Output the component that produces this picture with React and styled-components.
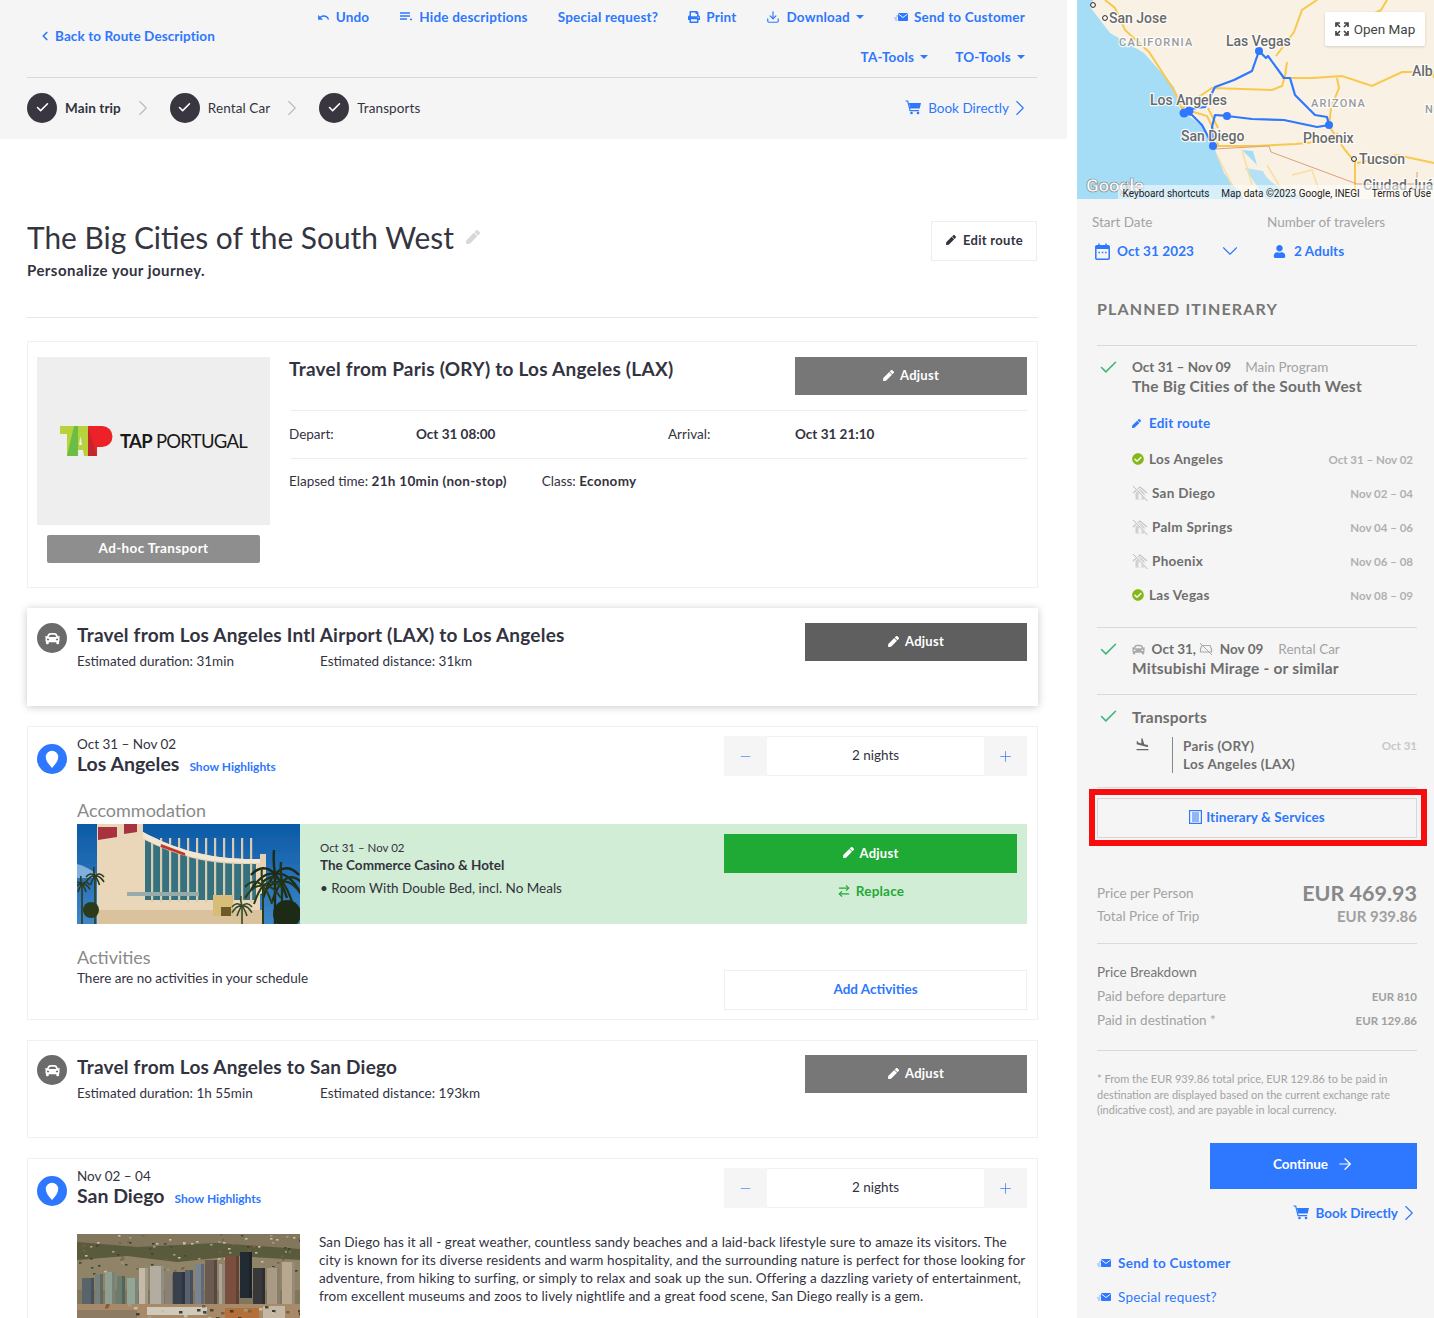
import React from "react";
import styled, { createGlobalStyle } from "styled-components";
import {
    Check,
    ChevronLeft,
    ChevronRight,
    ChevronDown,
    ArrowRight,
    Plus,
    Minus,
    Download as DownloadIcon,
    ArrowRightLeft,
} from "lucide-react";
import { FaPrint, FaPen, FaCar, FaUser, FaCheckCircle } from "react-icons/fa";
import { MdFlightLand, MdUndo } from "react-icons/md";

const BLUE = "#2e77ff";
const INK = "#33333f";

const GlobalStyle = createGlobalStyle`
    html, body {
        margin: 0;
        height: 1318px;
        overflow: hidden;
        background: #fff;
    }
    body {
        font-family: "Lato", "Liberation Sans", sans-serif;
        font-size: 13.5px;
        color: ${INK};
    }
    * { box-sizing: border-box; }
`;

const Page = styled.div`
    display: flex;
    width: 1434px;
    height: 1318px;
    overflow: hidden;
    gap: 10px;
`;

const Main = styled.main`
    width: 1067px;
    flex: none;
`;

const TopBar = styled.div`
    height: 139px;
    background: #f5f5f5;
    padding: 0 30px 0 27px;
`;

const TopHeader = styled.div`
    height: 78px;
    display: flex;
    justify-content: space-between;
    align-items: flex-start;
    border-bottom: 1px solid #d9d9d9;
`;

const BackLink = styled.a`
    display: flex;
    align-items: center;
    gap: 3px;
    margin: 26px 0 0 11px;
    line-height: 20px;
    font-weight: 700;
    letter-spacing: 0.1px;
    color: ${BLUE};
`;

const ToolRows = styled.div`
    display: flex;
    flex-direction: column;
    align-items: flex-end;
    gap: 20px;
    padding: 7px 12px 0 0;
`;

const ToolRow = styled.div`
    display: flex;
    gap: ${(p) => p.$gap}px;
`;

const Tool = styled.a`
    display: flex;
    align-items: center;
    gap: 6px;
    height: 20px;
    font-weight: 700;
    letter-spacing: 0.2px;
    color: ${BLUE};
    white-space: nowrap;
`;

const Caret = styled.span`
    width: 0;
    height: 0;
    border-left: 4px solid transparent;
    border-right: 4px solid transparent;
    border-top: 4px solid ${BLUE};
`;

const StepRow = styled.div`
    height: 61px;
    display: flex;
    align-items: center;
    padding: 0 4px 2px 0;
`;

const StepDot = styled.span`
    width: 30px;
    height: 30px;
    border-radius: 50%;
    background: #3a3640;
    color: #fff;
    display: flex;
    align-items: center;
    justify-content: center;
    margin-right: 8px;
`;

const StepLabel = styled.span`
    font-weight: ${(p) => (p.$bold ? 700 : 400)};
    letter-spacing: 0.1px;
`;

const StepChevron = styled(ChevronRight)`
    color: #b9b9b9;
    margin: 0 14px 0 9px;
`;

const BookLink = styled.a`
    margin-left: auto;
    display: flex;
    align-items: center;
    gap: 6px;
    color: ${BLUE};
    font-weight: ${(p) => (p.$bold ? 700 : 400)};
`;

const BookChevron = styled(ChevronRight)`
    margin-left: -8px;
`;

const Content = styled.div`
    padding: 80px 29px 0 27px;
`;

const TitleBlock = styled.div`
    display: flex;
    justify-content: space-between;
    align-items: flex-start;
    padding-bottom: 37px;
    border-bottom: 1px solid #e6e6e6;
    margin-bottom: 23px;
`;

const Title = styled.h1`
    display: flex;
    align-items: center;
    gap: 12px;
    margin: 0;
    font-size: 29.9px;
    line-height: 36px;
    font-weight: 400;
    color: #35353f;
`;

const SubTitle = styled.div`
    margin-top: 5px;
    font-size: 15px;
    line-height: 20px;
    font-weight: 700;
    letter-spacing: 0.45px;
`;

const EditRoute = styled.button`
    margin: 2px 1px 0 0;
    width: 106px;
    height: 40px;
    padding: 0 0 2px 1px;
    background: #fff;
    border: 1px solid #eee;
    font: 700 13px "Lato", sans-serif;
    letter-spacing: 0.3px;
    color: ${INK};
    display: flex;
    align-items: center;
    justify-content: center;
    gap: 7px;
`;

const Stack = styled.div`
    display: flex;
    flex-direction: column;
    gap: 20px;
`;

const Card = styled.section`
    border: 1px solid #f0f0f0;
    background: #fff;
    padding: 15px 10px 24px 9px;
`;

const FlightGrid = styled.div`
    display: grid;
    grid-template-columns: 233px 1fr;
    column-gap: 19px;
`;

const LogoBox = styled.div`
    height: 168px;
    background: #eee;
    display: flex;
    align-items: center;
    justify-content: center;
    gap: 6px;
`;

const LogoText = styled.span`
    font-size: 18.5px;
    letter-spacing: -0.75px;
    color: #1a1a1a;
    font-weight: 400;
    white-space: nowrap;
    b {
        font-weight: 700;
    }
`;

const AdHoc = styled.div`
    margin: 10px 10px 0;
    height: 28px;
    padding-bottom: 2px;
    border-radius: 2px;
    background: #8e8e8e;
    color: #fff;
    font-weight: 700;
    letter-spacing: 0.35px;
    display: flex;
    align-items: center;
    justify-content: center;
`;

const FlightHead = styled.div`
    display: flex;
    justify-content: space-between;
    align-items: flex-start;
    padding-bottom: 15px;
`;

const FlightTitle = styled.h2`
    margin: 0;
    font-size: 19px;
    line-height: 24px;
    font-weight: 700;
    letter-spacing: 0.25px;
`;

const AdjustButton = styled.button`
    width: ${(p) => p.$width}px;
    height: ${(p) => p.$height || 38}px;
    flex: none;
    padding: 0 0 2px;
    border: 0;
    background: ${(p) => p.$bg};
    color: #fff;
    font: 700 13px "Lato", sans-serif;
    letter-spacing: 0.25px;
    display: flex;
    align-items: center;
    justify-content: center;
    gap: 6px;
`;

const FlightRow = styled.div`
    display: grid;
    grid-template-columns: 127px 252px 127px 1fr;
    align-items: center;
    height: 49px;
    margin-left: 2px;
    padding-bottom: 2px;
    border-top: 1px solid #ececec;
    border-bottom: 1px solid #ececec;
    & > span {
        margin-left: -2px;
    }
`;

const Strong = styled.b`
    font-weight: 700;
`;

const ElapsedRow = styled.div`
    display: flex;
    gap: 35px;
    padding-top: 12px;
    line-height: 20px;
    b {
        letter-spacing: 0.3px;
    }
`;

const TransferCard = styled.section`
    display: flex;
    height: 98px;
    padding: ${(p) => (p.$raised ? "15px 11px 0 10px" : "14px 10px 0 9px")};
    background: #fff;
    border: ${(p) => (p.$raised ? "0" : "1px solid #f0f0f0")};
    box-shadow: ${(p) => (p.$raised ? "0 1px 8px rgba(0,0,0,.22)" : "none")};
`;

const RoundIcon = styled.span`
    width: 30px;
    height: 30px;
    border-radius: 50%;
    flex: none;
    background: ${(p) => p.$bg};
    color: #fff;
    display: flex;
    align-items: center;
    justify-content: center;
    margin: ${(p) => p.$top || 0}px 10px 0 0;
`;

const TransferBody = styled.div`
    flex: 1;
`;

const TransferTitle = styled.h3`
    margin: 0 0 5px;
    font-size: 19px;
    line-height: 24px;
    font-weight: 700;
    letter-spacing: 0.22px;
`;

const Meta = styled.div`
    display: grid;
    grid-template-columns: 243px 1fr;
    line-height: 18px;
`;

const StayCard = styled.section`
    border: 1px solid #f0f0f0;
    background: #fff;
    padding: 9px 10px 9px 9px;
`;

const StayHead = styled.div`
    display: flex;
    align-items: flex-start;
    height: 40px;
`;

const StayText = styled.div`
    flex: 1;
`;

const StayDates = styled.div`
    line-height: 16px;
`;

const StayName = styled.div`
    display: flex;
    align-items: baseline;
    gap: 10px;
    font-size: 19.5px;
    line-height: 24px;
    font-weight: 700;
`;

const Highlights = styled.a`
    font-size: 12px;
    font-weight: 700;
    color: ${BLUE};
`;

const Stepper = styled.div`
    display: grid;
    grid-template-columns: 43px 1fr 43px;
    width: 303px;
    height: 40px;
    flex: none;
`;

const StepperEnd = styled.span`
    background: #f5f5f5;
    color: ${BLUE};
    display: flex;
    align-items: center;
    justify-content: center;
`;

const StepperValue = styled.span`
    border-top: 1px solid #f0f0f0;
    border-bottom: 1px solid #f0f0f0;
    padding-bottom: 2px;
    display: flex;
    align-items: center;
    justify-content: center;
`;

const StayBody = styled.div`
    padding-left: 40px;
`;

const SectionLabel = styled.div`
    font-size: 18px;
    line-height: 22px;
    color: #8a8a8a;
    margin-top: ${(p) => p.$top}px;
`;

const HotelRow = styled.div`
    margin-top: 3px;
    height: 100px;
    display: flex;
    background: #d2edd5;
`;

const Photo = styled.svg`
    width: 223px;
    height: 100px;
    flex: none;
    display: block;
`;

const HotelInfo = styled.div`
    flex: 1;
    padding: 16px 0 0 20px;
`;

const HotelDates = styled.div`
    font-size: 11.5px;
    line-height: 16px;
`;

const HotelName = styled.div`
    font-weight: 700;
    line-height: 18px;
`;

const HotelRoom = styled.div`
    margin-top: 5px;
    line-height: 18px;
`;

const HotelActions = styled.div`
    width: 303px;
    flex: none;
    padding: 10px 10px 0 0;
`;

const ReplaceLink = styled.a`
    display: flex;
    align-items: center;
    justify-content: center;
    gap: 5px;
    margin-top: 8px;
    line-height: 20px;
    font-weight: 700;
    letter-spacing: 0.2px;
    color: #1faa36;
`;

const ActivityRow = styled.div`
    display: flex;
    justify-content: space-between;
    align-items: flex-start;
`;

const ActivityNote = styled.div`
    line-height: 18px;
    margin-top: 1px;
`;

const AddButton = styled.button`
    width: 303px;
    height: 40px;
    margin-top: 46px;
    padding: 0 0 2px;
    background: #fff;
    border: 1px solid #efefef;
    color: ${BLUE};
    font: 700 13.5px "Lato", sans-serif;
`;

const CityRow = styled.div`
    display: flex;
    gap: 19px;
    margin-top: 26px;
`;

const CityText = styled.p`
    margin: -1px 0 0;
    line-height: 18px;
    letter-spacing: 0.1px;
`;

/* right column */

const Side = styled.aside`
    width: 357px;
    flex: none;
    background: #f5f5f5;
    height: 1318px;
    overflow: hidden;
`;

const MapWrap = styled.div`
    position: relative;
    height: 199px;
    overflow: hidden;
    background: #f8f1e4;
`;

const MapSvg = styled.svg`
    display: block;
    width: 357px;
    height: 199px;
`;

const OpenMap = styled.button`
    position: absolute;
    top: 12px;
    right: 9px;
    width: 100px;
    height: 34px;
    border: 0;
    border-radius: 2px;
    background: #fff;
    box-shadow: 0 1px 3px rgba(0, 0, 0, 0.15);
    font: 400 13.5px "Roboto", sans-serif;
    color: #444;
    display: flex;
    align-items: center;
    justify-content: center;
    gap: 5px;
`;

const Attribution = styled.div`
    position: absolute;
    right: 0;
    bottom: 0;
    display: flex;
    gap: 12px;
    padding: 1px 3px 0 5px;
    height: 14px;
    background: rgba(255, 255, 255, 0.55);
    font: 400 10px/15px "Roboto", sans-serif;
    color: #222;
    white-space: nowrap;
`;

const GoogleMark = styled.span`
    position: absolute;
    left: 9px;
    bottom: 2px;
    font: 700 19px "Roboto", sans-serif;
    color: #fff;
    -webkit-text-stroke: 0.7px #8a8a8a;
    letter-spacing: -0.5px;
`;

const SidePad = styled.div`
    padding: 0 17px 0 20px;
`;

const TripGrid = styled.div`
    display: grid;
    grid-template-columns: 175px 1fr;
    margin: 14px 0 0 -5px;
`;

const TripLabel = styled.div`
    line-height: 18px;
    color: #a3a3a3;
`;

const TripValue = styled.div`
    display: flex;
    align-items: center;
    height: 20px;
    margin-top: 10px;
    padding-left: ${(p) => p.$indent}px;
    gap: ${(p) => p.$gap}px;
    font-weight: 700;
    letter-spacing: 0.1px;
    color: ${BLUE};
`;

const DateChevron = styled(ChevronDown)`
    margin-left: 16px;
    color: ${BLUE};
`;

const Planned = styled.h4`
    margin: 38px 0 26px;
    font-size: 16px;
    line-height: 20px;
    font-weight: 700;
    letter-spacing: 1.15px;
    color: #777;
`;

const Block = styled.div`
    position: relative;
    border-top: 1px solid #d9d9d9;
    padding: ${(p) => p.$pad};
`;

const BlockCheck = styled(Check)`
    position: absolute;
    left: 1px;
    top: ${(p) => p.$top}px;
    color: #3cb878;
`;

const BlockDates = styled.div`
    display: flex;
    align-items: center;
    line-height: 18px;
    font-weight: 700;
    color: #6e6e6e;
`;

const BlockKind = styled.span`
    margin-left: ${(p) => p.$left}px;
    font-weight: 400;
    color: #a3a3a3;
`;

const BlockTitle = styled.div`
    font-size: 15.5px;
    line-height: 20px;
    font-weight: 700;
    letter-spacing: 0.2px;
    color: #6e6e6e;
`;

const EditLink = styled.a`
    display: flex;
    align-items: center;
    gap: 8px;
    margin-top: 17px;
    line-height: 20px;
    font-weight: 700;
    letter-spacing: 0.2px;
    color: ${BLUE};
`;

const Cities = styled.div`
    margin: 9px 4px 0 0;
`;

const CityItem = styled.div`
    display: flex;
    align-items: center;
    height: 34px;
    font-weight: 700;
    letter-spacing: 0.3px;
    color: #6e6e6e;
    gap: ${(p) => (p.$done ? 5 : 4)}px;
    span:last-child {
        margin-left: auto;
        font-size: 11.5px;
        letter-spacing: 0;
        color: #b0b0b0;
    }
`;

const TransportRow = styled.div`
    display: flex;
    margin-top: 10px;
`;

const PlaneCell = styled.span`
    width: 40px;
    height: 36px;
    flex: none;
    padding-left: 3px;
    display: flex;
    align-items: flex-start;
    color: #666;
`;

const TransportText = styled.div`
    flex: 1;
    border-left: 1px solid #888;
    padding-left: 10px;
    line-height: 18px;
    font-weight: 700;
    letter-spacing: 0.3px;
    color: #6e6e6e;
    height: 36px;
`;

const TransportDate = styled.span`
    font-size: 11.5px;
    font-weight: 700;
    color: #c8c8c8;
    line-height: 18px;
`;

const RedFrame = styled.div`
    margin: 1px -10px 0 -8px;
    border: 6px solid #f60d0d;
    padding: 3px 4px 2px 2px;
`;

const ItineraryButton = styled.button`
    width: 100%;
    height: 40px;
    padding: 0 0 2px;
    background: #f5f5f5;
    border: 1px solid #d6d6d6;
    color: ${BLUE};
    font: 700 13.5px "Lato", sans-serif;
    letter-spacing: 0.1px;
    display: flex;
    align-items: center;
    justify-content: center;
    gap: 4px;
`;

const PriceRow = styled.div`
    display: flex;
    justify-content: space-between;
    align-items: center;
    height: ${(p) => p.$height}px;
    margin-top: ${(p) => p.$top || 0}px;
    color: #a3a3a3;
`;

const PriceMain = styled.b`
    font-size: 21.5px;
    color: #888;
`;

const PriceSub = styled.b`
    font-size: 15px;
    color: #a0a0a0;
`;

const PriceSmall = styled.b`
    font-size: 11.5px;
    color: #a0a0a0;
`;

const Divider = styled.div`
    border-top: 1px solid #d9d9d9;
    margin-top: ${(p) => p.$top}px;
`;

const BreakTitle = styled.div`
    margin-top: 18px;
    line-height: 20px;
    color: #777;
`;

const FootNote = styled.p`
    margin: 20px 0 0;
    font-size: 11px;
    line-height: 15.5px;
    color: #a3a3a3;
`;

const ContinueRow = styled.div`
    display: flex;
    justify-content: flex-end;
    margin-top: 25px;
`;

const Continue = styled.button`
    width: 207px;
    height: 46px;
    padding: 0 0 4px;
    border: 0;
    background: ${BLUE};
    color: #fff;
    font: 700 13.5px "Lato", sans-serif;
    display: flex;
    align-items: center;
    justify-content: center;
    gap: 8px;
`;

const BookRow = styled.div`
    display: flex;
    justify-content: flex-end;
    margin: 14px -5px 0 0;
    height: 20px;
`;

const SideLink = styled.a`
    display: flex;
    align-items: center;
    gap: 7px;
    height: 20px;
    margin-top: ${(p) => p.$top}px;
    color: ${BLUE};
    font-weight: ${(p) => (p.$bold ? 700 : 400)};
    letter-spacing: ${(p) => (p.$bold ? 0.3 : 0.2)}px;
`;

/* drawn icons */

const LinesIcon = () => (
    <svg width="14" height="12" viewBox="0 0 14 12" fill="none" stroke={BLUE} strokeWidth="1.4">
        <path d="M1 2h10M1 5h10M1 8h7M11 8.5h2" />
    </svg>
);

const MailIcon = () => (
    <svg width="14" height="12" viewBox="0 0 14 12">
        <rect x="4" y="2" width="10" height="8" rx="1" fill={BLUE} />
        <path d="M4.5 3l4.5 3.5L13.5 3" fill="none" stroke="#f5f5f5" strokeWidth="1" />
        <path d="M0 7h3M1 9h2.5M2 5h2" stroke={BLUE} strokeWidth="1" opacity=".6" />
    </svg>
);

const CartIcon = () => (
    <svg width="17" height="15" viewBox="0 0 17 15" fill="none">
        <path d="M0.5 1h2.2l2.4 9.6h9" stroke={BLUE} strokeWidth="1.2" />
        <path d="M4 3h12l-1.3 5.5H5.2z" fill={BLUE} />
        <circle cx="6.5" cy="13" r="1.3" fill={BLUE} />
        <circle cx="13" cy="13" r="1.3" fill={BLUE} />
    </svg>
);

const PinIcon = () => (
    <svg width="14" height="18" viewBox="0 0 14 18">
        <path d="M7 18C3 13.5 .8 10.5 .8 7a6.2 6.2 0 0 1 12.4 0c0 3.5-2.2 6.5-6.2 11z" fill="#fff" />
    </svg>
);

const NoHotelIcon = () => (
    <svg width="16" height="16" viewBox="0 0 16 16" fill="none">
        <path d="M1 8l7-6 7 6" stroke="#c4c4c4" strokeWidth="1.2" />
        <path d="M3.5 8v6.5h9V8L8 4z" fill="#d0d0d0" />
        <rect x="6.5" y="9" width="3" height="5.5" fill="#f5f5f5" />
        <path d="M1 0.5l14.5 15" stroke="#f5f5f5" strokeWidth="2.2" />
        <path d="M1 1l14.5 15" stroke="#b8b8b8" strokeWidth="1" />
    </svg>
);

const NoCarIcon = () => (
    <svg width="14" height="14" viewBox="0 0 14 14" fill="none">
        <path d="M1.5 10V7l1.5-3.5h8L12.5 7v3z" stroke="#aaa" strokeWidth="1.2" />
        <path d="M1 1l12 12" stroke="#aaa" strokeWidth="1" />
    </svg>
);

const CalendarIcon = () => (
    <svg width="15" height="17" viewBox="0 0 15 17" fill="none">
        <rect x=".8" y="2.8" width="13.4" height="13.4" rx="1" stroke={BLUE} strokeWidth="1.5" />
        <path d="M.8 3h13.4v3H.8z" fill={BLUE} />
        <path d="M4 .5v3M11 .5v3" stroke={BLUE} strokeWidth="1.5" />
        <path d="M3.5 9.5h1.5M6.8 9.5h1.5M10 9.5h1.5" stroke={BLUE} strokeWidth="1.3" />
    </svg>
);

const ListBoxIcon = () => (
    <svg width="13" height="14" viewBox="0 0 13 14" fill="none">
        <rect x=".6" y=".6" width="11.8" height="12.8" stroke={BLUE} strokeWidth="1.2" />
        <path d="M3 3h7M3 5h7M3 7h7M3 9h7M3 11h7" stroke={BLUE} strokeWidth="1" />
    </svg>
);

const ExpandIcon = () => (
    <svg width="14" height="14" viewBox="0 0 14 14" fill="none" stroke="#444" strokeWidth="1.7">
        <path d="M1 5V1h4M1 1l4 4M13 5V1H9M13 1L9 5M1 9v4h4M1 13l4-4M13 9v4H9M13 13L9 9" />
    </svg>
);

const TapLogo = () => (
    <svg width="54" height="30" viewBox="0 0 54 30">
        <path d="M0 0h18l-8 30H7V8H0z" fill="#b7d33c" />
        <path d="M7 30L14 0h4v30z" fill="#6cbd45" />
        <path d="M18 0h10l4 30H24l-1-6h-5z" fill="#b7d33c" />
        <path d="M19 19l1.5-9 1.5 9z" fill="#eee" />
        <path d="M28 0h14a10.5 10.5 0 0 1 0 21h-5v9h-5z" fill="#ec2227" />
        <path d="M28 0l9 30h-9z" fill="#c4262e" />
        <circle cx="40" cy="10.5" r="3" fill="#ec2227" />
    </svg>
);

const MapLabel = styled.text`
    font-family: "Roboto", sans-serif;
    font-size: ${(p) => p.$size || 14}px;
    font-weight: ${(p) => p.$weight || 500};
    fill: ${(p) => p.$fill || "#6a6a6a"};
    letter-spacing: ${(p) => p.$spacing || 0}px;
    stroke: rgba(255, 255, 255, 0.85);
    stroke-width: 2.5px;
    paint-order: stroke;
`;

const RouteMap = () => (
    <MapSvg viewBox="0 0 357 199">
        <rect width="357" height="199" fill="#f8f1e4" />
        <path d="M0 0h16l-3 7 20 26 34 20 30 34 6 23 24 17 10 20 10 26 20 26H0z" fill="#a5dcf6" />
        <path d="M168 168c6 10 14 20 20 31h44c-14-6-40-12-46-28z" fill="#a5dcf6" opacity=".8" />
        <path d="M165 150l10 10 5 5-4-14z" fill="#a5dcf6" />
        <g fill="none" stroke="#f8c94e" strokeWidth="2">
            <path d="M28 0l10 8 10 22 24 22 26 40 8 20" />
            <path d="M105 108l30-20 60 2 10-4 3-10 2-14" />
            <path d="M240 0l-15 10-8 22-18 24" />
            <path d="M205 78l30 0 30-2 30 10 30-14 30 0 2 6" />
            <path d="M260 78l2 10-8 20-2 18 16 24 10 12v30" />
            <path d="M137 146l40 0 42-2 30-3 12-8" />
            <path d="M110 110l20 6 10 20 1 10M131 108l10 20M140 115l12 0" />
            <path d="M280 163l40-8 37 8" />
            <path d="M310 0l-6 10-20 10" />
        </g>
        <path d="M137 149l55-3 2 6 86 32h75M340 172v27" fill="none" stroke="#e0a080" strokeWidth="1" />
        <g fill="none" stroke="#f8dfa0" strokeWidth="1.5">
            <path d="M140 155l15 30 20 14M165 150l10 35M190 165l20 34M215 175l20-5 10 29" />
        </g>
        <polyline
            points="107,113 113,109 128,107 138,87 157,80 175,71 182,51 189,58 191,56 207,78 213,78 218,95 238,115 250,117 252,125 240,127 207,120 175,119 150,116 138,115 135,127 136,146 125,125 115,115 107,113"
            fill="none"
            stroke={BLUE}
            strokeWidth="2.2"
            strokeLinejoin="round"
        />
        <g fill={BLUE}>
            <circle cx="182" cy="51" r="4" />
            <circle cx="252" cy="125" r="4" />
            <circle cx="150" cy="116" r="4" />
            <circle cx="136" cy="146" r="4" />
            <circle cx="112" cy="111" r="4.5" />
            <circle cx="107" cy="113" r="4.5" />
        </g>
        <g fill="#fff" stroke="#222" strokeWidth="1">
            <circle cx="16" cy="5" r="2.4" />
            <circle cx="28" cy="18" r="2.4" />
            <circle cx="277" cy="159" r="2.4" />
        </g>
        <MapLabel x="32" y="23">San Jose</MapLabel>
        <MapLabel x="42" y="46" $size={11} $fill="#9a9a9a" $spacing={1.2}>CALIFORNIA</MapLabel>
        <MapLabel x="149" y="46">Las Vegas</MapLabel>
        <MapLabel x="73" y="105">Los Angeles</MapLabel>
        <MapLabel x="104" y="141">San Diego</MapLabel>
        <MapLabel x="226" y="143">Phoenix</MapLabel>
        <MapLabel x="282" y="164">Tucson</MapLabel>
        <MapLabel x="234" y="107" $size={11} $fill="#9a9a9a" $spacing={1.2}>ARIZONA</MapLabel>
        <MapLabel x="335" y="76">Alb</MapLabel>
        <MapLabel x="348" y="113" $size={11} $fill="#9a9a9a">N</MapLabel>
        <MapLabel x="286" y="190">Ciudad Juá</MapLabel>
    </MapSvg>
);

const Palm = ({ x, y, r, color, width = 1.6 }) => (
    <g stroke={color} strokeWidth={width} fill="none">
        <path d={`M${x} ${y}v${100 - y}`} />
        <path d={`M${x} ${y}q${-r / 2} ${-r / 2} ${-r} 1M${x} ${y}q${r / 2} ${-r / 2} ${r} 1M${x} ${y}q${-r / 2} ${-r / 8} ${-r} ${r / 1.5}M${x} ${y}q${r / 2} ${-r / 8} ${r} ${r / 1.5}M${x} ${y}q-2 ${-r / 2} -1 ${-r}M${x} ${y}q${-r / 4} ${r / 4} ${-r / 2} ${r}M${x} ${y}q${r / 4} ${r / 4} ${r / 2} ${r}`} />
    </g>
);

const HotelPhoto = () => (
    <Photo viewBox="0 0 223 100">
        <defs>
            <linearGradient id="hotelSky" x1="0" y1="0" x2="0" y2="1">
                <stop offset="0" stopColor="#0b5aa6" />
                <stop offset="1" stopColor="#3f86c8" />
            </linearGradient>
            <filter id="soft"><feGaussianBlur stdDeviation="0.4" /></filter>
        </defs>
        <g filter="url(#soft)">
            <rect width="223" height="100" fill="url(#hotelSky)" />
            <path d="M0 40c8 2 14 6 20 10v4H0z" fill="#7fb0dc" />
            <path d="M20 0h46v100H20z" fill="#ead6b8" />
            <path d="M66 8c34 18 68 28 117 27v65H66z" fill="#ead6b8" />
            <path d="M68 16c32 16 62 25 111 24v36H68z" fill="#36717f" />
            {[74, 83, 92, 101, 110, 119, 128, 137, 146, 155, 164, 173].map((x) => (
                <rect key={x} x={x} y="14" width="2.2" height="64" fill="#d8cbb0" />
            ))}
            <path d="M66 8c34 18 68 28 117 27v4C130 40 96 30 66 14z" fill="#f2e7d3" />
            <path d="M84 20l24 9 .5 3-25-9z" fill="#c0392b" />
            <path d="M21 3h19v10l-19 3zM47 0h13v8l-13 2z" fill="#a83240" />
            <rect x="183" y="30" width="6" height="40" fill="#e3d2b4" />
            <rect x="20" y="86" width="165" height="14" fill="#d9c29c" />
            <rect x="50" y="68" width="72" height="4" fill="#98abab" />
            <rect x="136" y="71" width="20" height="21" fill="#d8bd78" />
            <rect x="144" y="83" width="10" height="9" fill="#6d5a2c" />
            <Palm x={198} y={50} r={24} color="#1e2c16" width={2.4} />
            <Palm x={205} y={58} r={20} color="#243319" width={2.4} />
            <Palm x={186} y={62} r={18} color="#2c3a1c" width={2} />
            <Palm x={18} y={52} r={9} color="#2a3a20" />
            <Palm x={5} y={60} r={8} color="#2a3a20" />
            <Palm x={165} y={82} r={10} color="#36482a" />
            <circle cx="210" cy="90" r="14" fill="#1e2c16" />
            <circle cx="14" cy="86" r="8" fill="#2c3a1c" />
        </g>
    </Photo>
);

const towers = [
    [5, 44, 12, 32, "#59636a"], [18, 40, 8, 36, "#78807a"], [28, 38, 10, 38, "#8fa093"], [40, 42, 8, 34, "#6b7c70"],
    [50, 44, 11, 32, "#93a594"], [62, 34, 9, 42, "#c5baa9"], [73, 32, 14, 44, "#b3aca0"], [88, 40, 10, 36, "#8a8276"],
    [96, 38, 12, 38, "#37414e"], [108, 36, 8, 38, "#58626e"], [118, 30, 9, 44, "#7a8390"], [128, 26, 12, 50, "#6a5a50"],
    [142, 30, 6, 44, "#b0a594"], [148, 22, 14, 50, "#7a4f40"], [163, 18, 12, 46, "#242a32"], [176, 34, 12, 42, "#37373b"],
    [190, 34, 13, 40, "#a89a84"], [205, 28, 13, 44, "#b8a890"],
];

// speckle for the aerial photo, fixed seed so the picture stays the same
const speckle = [];
let seed = 7;
const next = (n) => {
    seed = (seed * 16807) % 2147483647;
    return seed % n;
};
for (let i = 0; i < 260; i++) {
    speckle.push({
        x: next(223),
        y: next(100),
        c: ["#4c4a34", "#a69a80", "#6b6650", "#c9bda4", "#8a5a3c", "#3e4030"][next(6)],
    });
}

const CityPhoto = () => (
    <Photo viewBox="0 0 223 100">
        <g filter="url(#soft)">
            <rect width="223" height="100" fill="#82765c" />
            <path d="M0 8l60 5 80-4 83 6v24H0z" fill="#5a5a3e" />
            <path d="M0 26l50-4 50 6 60-6 63 4v30H0z" fill="#8f8368" />
            {speckle.filter((s) => s.y < 40).map((s, i) => (
                <rect key={i} x={s.x} y={s.y} width="2.5" height="1.6" fill={s.c} />
            ))}
            {towers.map(([x, y, w, h, c]) => (
                <g key={x}>
                    <rect x={x} y={y} width={w} height={h} fill={c} />
                    <rect x={x + w - 3} y={y} width="3" height={h} fill="#000" opacity=".18" />
                </g>
            ))}
            <rect y="70" width="223" height="30" fill="#a68a6a" />
            <rect x="70" y="73" width="60" height="8" fill="#cfcabc" />
            <rect x="148" y="74" width="34" height="10" fill="#b36f3a" />
            <rect x="186" y="72" width="22" height="14" fill="#c4b8a4" />
            <rect x="0" y="76" width="60" height="8" fill="#8d7c64" />
            {speckle.filter((s) => s.y >= 70).map((s, i) => (
                <rect key={i} x={s.x} y={s.y} width="3.5" height="2.5" fill={s.c} />
            ))}
            <rect y="95" width="100" height="5" fill="#3a5a80" />
        </g>
    </Photo>
);

const Transfer = ({ title, duration, distance, raised, adjustBg }) => (
    <TransferCard $raised={raised}>
        <RoundIcon $bg="#6b6b6b">
            <FaCar size={15} />
        </RoundIcon>
        <TransferBody>
            <TransferTitle>{title}</TransferTitle>
            <Meta>
                <span>Estimated duration: {duration}</span>
                <span>Estimated distance: {distance}</span>
            </Meta>
        </TransferBody>
        <AdjustButton $width={222} $bg={adjustBg}>
            <FaPen size={11} /> Adjust
        </AdjustButton>
    </TransferCard>
);

const StayHeader = ({ dates, name }) => (
    <StayHead>
        <RoundIcon $bg={BLUE} $top={8}>
            <PinIcon />
        </RoundIcon>
        <StayText>
            <StayDates>{dates}</StayDates>
            <StayName>
                {name} <Highlights>Show Highlights</Highlights>
            </StayName>
        </StayText>
        <Stepper>
            <StepperEnd>
                <Minus size={15} strokeWidth={1} />
            </StepperEnd>
            <StepperValue>2 nights</StepperValue>
            <StepperEnd>
                <Plus size={17} strokeWidth={1} />
            </StepperEnd>
        </Stepper>
    </StayHead>
);

const routeCities = [
    { name: "Los Angeles", dates: "Oct 31 – Nov 02", done: true },
    { name: "San Diego", dates: "Nov 02 – 04" },
    { name: "Palm Springs", dates: "Nov 04 – 06" },
    { name: "Phoenix", dates: "Nov 06 – 08" },
    { name: "Las Vegas", dates: "Nov 08 – 09", done: true },
];

const App = () => {
    return (
        <Page>
            <GlobalStyle />
            <Main>
                <TopBar>
                    <TopHeader>
                        <BackLink>
                            <ChevronLeft size={14} strokeWidth={3} /> Back to Route Description
                        </BackLink>
                        <ToolRows>
                            <ToolRow $gap={30}>
                                <Tool><MdUndo size={13} /> Undo</Tool>
                                <Tool><LinesIcon /> Hide descriptions</Tool>
                                <Tool>Special request?</Tool>
                                <Tool><FaPrint size={12} /> Print</Tool>
                                <Tool><DownloadIcon size={14} /> Download <Caret /></Tool>
                                <Tool><MailIcon /> Send to Customer</Tool>
                            </ToolRow>
                            <ToolRow $gap={27}>
                                <Tool>TA-Tools <Caret /></Tool>
                                <Tool>TO-Tools <Caret /></Tool>
                            </ToolRow>
                        </ToolRows>
                    </TopHeader>
                    <StepRow>
                        <StepDot><Check size={15} strokeWidth={2.5} /></StepDot>
                        <StepLabel $bold>Main trip</StepLabel>
                        <StepChevron size={26} strokeWidth={1} />
                        <StepDot><Check size={15} strokeWidth={2.5} /></StepDot>
                        <StepLabel>Rental Car</StepLabel>
                        <StepChevron size={26} strokeWidth={1} />
                        <StepDot><Check size={15} strokeWidth={2.5} /></StepDot>
                        <StepLabel>Transports</StepLabel>
                        <BookLink>
                            <CartIcon /> Book Directly <BookChevron size={26} strokeWidth={1} />
                        </BookLink>
                    </StepRow>
                </TopBar>

                <Content>
                    <TitleBlock>
                        <div>
                            <Title>
                                The Big Cities of the South West
                                <FaPen size={14} color="#d8d8d8" />
                            </Title>
                            <SubTitle>Personalize your journey.</SubTitle>
                        </div>
                        <EditRoute><FaPen size={10} /> Edit route</EditRoute>
                    </TitleBlock>

                    <Stack>
                        <Card>
                            <FlightGrid>
                                <div>
                                    <LogoBox>
                                        <TapLogo />
                                        <LogoText><b>TAP</b> PORTUGAL</LogoText>
                                    </LogoBox>
                                    <AdHoc>Ad-hoc Transport</AdHoc>
                                </div>
                                <div>
                                    <FlightHead>
                                        <FlightTitle>Travel from Paris (ORY) to Los Angeles (LAX)</FlightTitle>
                                        <AdjustButton $width={232} $bg="#777">
                                            <FaPen size={11} /> Adjust
                                        </AdjustButton>
                                    </FlightHead>
                                    <FlightRow>
                                        <span>Depart:</span>
                                        <span><Strong>Oct 31 08:00</Strong></span>
                                        <span>Arrival:</span>
                                        <span><Strong>Oct 31 21:10</Strong></span>
                                    </FlightRow>
                                    <ElapsedRow>
                                        <span>Elapsed time: <Strong>21h 10min (non-stop)</Strong></span>
                                        <span>Class: <Strong>Economy</Strong></span>
                                    </ElapsedRow>
                                </div>
                            </FlightGrid>
                        </Card>

                        <Transfer
                            raised
                            adjustBg="#5f5f5f"
                            title="Travel from Los Angeles Intl Airport (LAX) to Los Angeles"
                            duration="31min"
                            distance="31km"
                        />

                        <StayCard>
                            <StayHeader dates="Oct 31 – Nov 02" name="Los Angeles" />
                            <StayBody>
                                <SectionLabel $top={23}>Accommodation</SectionLabel>
                                <HotelRow>
                                    <HotelPhoto />
                                    <HotelInfo>
                                        <HotelDates>Oct 31 – Nov 02</HotelDates>
                                        <HotelName>The Commerce Casino &amp; Hotel</HotelName>
                                        <HotelRoom>• Room With Double Bed, incl. No Meals</HotelRoom>
                                    </HotelInfo>
                                    <HotelActions>
                                        <AdjustButton $width={293} $height={39} $bg="#1faa36">
                                            <FaPen size={11} /> Adjust
                                        </AdjustButton>
                                        <ReplaceLink>
                                            <ArrowRightLeft size={14} /> Replace
                                        </ReplaceLink>
                                    </HotelActions>
                                </HotelRow>
                                <ActivityRow>
                                    <div>
                                        <SectionLabel $top={22}>Activities</SectionLabel>
                                        <ActivityNote>There are no activities in your schedule</ActivityNote>
                                    </div>
                                    <AddButton>Add Activities</AddButton>
                                </ActivityRow>
                            </StayBody>
                        </StayCard>

                        <Transfer
                            adjustBg="#777"
                            title="Travel from Los Angeles to San Diego"
                            duration="1h 55min"
                            distance="193km"
                        />

                        <StayCard>
                            <StayHeader dates="Nov 02 – 04" name="San Diego" />
                            <StayBody>
                                <CityRow>
                                    <CityPhoto />
                                    <CityText>
                                        San Diego has it all - great weather, countless sandy beaches and a laid-back
                                        lifestyle sure to amaze its visitors. The city is known for its diverse
                                        residents and warm hospitality, and the surrounding nature is perfect for those
                                        looking for adventure, from hiking to surfing, or simply to relax and soak up
                                        the sun. Offering a dazzling variety of entertainment, from excellent museums
                                        and zoos to lively nightlife and a great food scene, San Diego really is a gem.
                                    </CityText>
                                </CityRow>
                            </StayBody>
                        </StayCard>
                    </Stack>
                </Content>
            </Main>

            <Side>
                <MapWrap>
                    <RouteMap />
                    <GoogleMark>Google</GoogleMark>
                    <OpenMap><ExpandIcon /> Open Map</OpenMap>
                    <Attribution>
                        <span>Keyboard shortcuts</span>
                        <span>Map data ©2023 Google, INEGI</span>
                        <span>Terms of Use</span>
                    </Attribution>
                </MapWrap>
                <SidePad>
                    <TripGrid>
                        <div>
                            <TripLabel>Start Date</TripLabel>
                            <TripValue $indent={3} $gap={7}>
                                <CalendarIcon /> Oct 31 2023 <DateChevron size={26} strokeWidth={1} />
                            </TripValue>
                        </div>
                        <div>
                            <TripLabel>Number of travelers</TripLabel>
                            <TripValue $indent={6} $gap={8}>
                                <FaUser size={13} /> 2 Adults
                            </TripValue>
                        </div>
                    </TripGrid>

                    <Planned>PLANNED ITINERARY</Planned>

                    <Block $pad="12px 0 15px 35px">
                        <BlockCheck $top={11} size={21} strokeWidth={1.8} />
                        <BlockDates>
                            Oct 31 – Nov 09 <BlockKind $left={14}>Main Program</BlockKind>
                        </BlockDates>
                        <BlockTitle>The Big Cities of the South West</BlockTitle>
                        <EditLink><FaPen size={9} /> Edit route</EditLink>
                        <Cities>
                            {routeCities.map((city) => (
                                <CityItem key={city.name} $done={city.done}>
                                    {city.done ? (
                                        <FaCheckCircle size={12} color="#84b817" />
                                    ) : (
                                        <NoHotelIcon />
                                    )}
                                    {city.name}
                                    <span>{city.dates}</span>
                                </CityItem>
                            ))}
                        </Cities>
                    </Block>

                    <Block $pad="12px 0 16px 35px">
                        <BlockCheck $top={11} size={21} strokeWidth={1.8} />
                        <BlockDates>
                            <FaCar size={13} color="#aaa" />&nbsp;&nbsp;Oct 31,&nbsp;<NoCarIcon />&nbsp;&nbsp;Nov 09
                            <BlockKind $left={15}>Rental Car</BlockKind>
                        </BlockDates>
                        <BlockTitle>Mitsubishi Mirage - or similar</BlockTitle>
                    </Block>

                    <Block $pad="12px 0 14px 35px">
                        <BlockCheck $top={11} size={21} strokeWidth={1.8} />
                        <BlockTitle>Transports</BlockTitle>
                        <TransportRow>
                            <PlaneCell><MdFlightLand size={15} /></PlaneCell>
                            <TransportText>Paris (ORY)<br />Los Angeles (LAX)</TransportText>
                            <TransportDate>Oct 31</TransportDate>
                        </TransportRow>
                    </Block>

                    <Block $pad="0">
                        <RedFrame>
                            <ItineraryButton><ListBoxIcon /> Itinerary &amp; Services</ItineraryButton>
                        </RedFrame>
                    </Block>

                    <PriceRow $height={24} $top={35}>
                        <span>Price per Person</span><PriceMain>EUR 469.93</PriceMain>
                    </PriceRow>
                    <PriceRow $height={20} $top={1}>
                        <span>Total Price of Trip</span><PriceSub>EUR 939.86</PriceSub>
                    </PriceRow>
                    <Divider $top={17} />
                    <BreakTitle>Price Breakdown</BreakTitle>
                    <PriceRow $height={20} $top={4}>
                        <span>Paid before departure</span><PriceSmall>EUR 810</PriceSmall>
                    </PriceRow>
                    <PriceRow $height={20} $top={4}>
                        <span>Paid in destination *</span><PriceSmall>EUR 129.86</PriceSmall>
                    </PriceRow>
                    <Divider $top={20} />
                    <FootNote>
                        * From the EUR 939.86 total price, EUR 129.86 to be paid in destination are displayed based on
                        the current exchange rate (indicative cost), and are payable in local currency.
                    </FootNote>
                    <ContinueRow>
                        <Continue>Continue <ArrowRight size={18} strokeWidth={1.6} /></Continue>
                    </ContinueRow>
                    <BookRow>
                        <BookLink $bold>
                            <CartIcon /> Book Directly <BookChevron size={26} strokeWidth={1} />
                        </BookLink>
                    </BookRow>
                    <SideLink $bold $top={30}><MailIcon /> Send to Customer</SideLink>
                    <SideLink $top={14}><MailIcon /> Special request?</SideLink>
                </SidePad>
            </Side>
        </Page>
    );
};

export default App;
